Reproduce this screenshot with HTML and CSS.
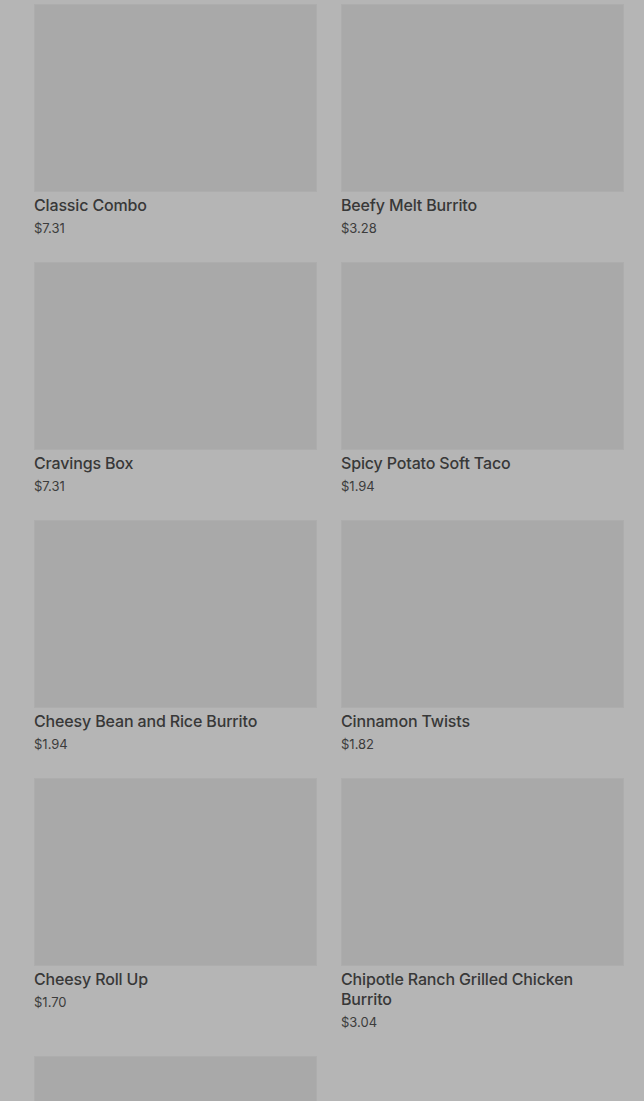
FILE: index.html
```html
<!DOCTYPE html>
<html lang="en">
<head>
    <meta charset="UTF-8">
    <meta name="viewport" content="width=device-width, initial-scale=1.0">
    <title>Menu</title>
    <link rel="stylesheet" href="styles.css">
</head>
<body>
    <div class="menu-grid">
        <div class="item">
            <div class="item-img"></div>
            <div class="item-name">Classic Combo</div>
            <div class="item-price">$7.31</div>
        </div>
        <div class="item">
            <div class="item-img"></div>
            <div class="item-name">Beefy Melt Burrito</div>
            <div class="item-price">$3.28</div>
        </div>
        <div class="item">
            <div class="item-img"></div>
            <div class="item-name">Cravings Box</div>
            <div class="item-price">$7.31</div>
        </div>
        <div class="item">
            <div class="item-img"></div>
            <div class="item-name">Spicy Potato Soft Taco</div>
            <div class="item-price">$1.94</div>
        </div>
        <div class="item">
            <div class="item-img"></div>
            <div class="item-name">Cheesy Bean and Rice Burrito</div>
            <div class="item-price">$1.94</div>
        </div>
        <div class="item">
            <div class="item-img"></div>
            <div class="item-name">Cinnamon Twists</div>
            <div class="item-price">$1.82</div>
        </div>
        <div class="item">
            <div class="item-img"></div>
            <div class="item-name">Cheesy Roll Up</div>
            <div class="item-price">$1.70</div>
        </div>
        <div class="item">
            <div class="item-img"></div>
            <div class="item-name">Chipotle Ranch Grilled Chicken Burrito</div>
            <div class="item-price">$3.04</div>
        </div>
        <div class="item">
            <div class="item-img"></div>
        </div>
    </div>
</body>
</html>
```

FILE: styles.css
```css
body {
    margin: 0;
    padding: 0;
    background-color: #b5b5b5;
    font-family: Inter, "Noto Sans", sans-serif;
    overflow: hidden;
}

.menu-grid {
    display: grid;
    grid-template-columns: 283px 283px;
    column-gap: 24px;
    row-gap: 24px;
    padding: 4px 20px 0 34px;
    align-items: start;
}

.item-img {
    height: 188px;
    background-color: #a9a9a9;
    box-shadow: inset 0 0 0 1px #adadad;
}

.item-name {
    margin-top: 3px;
    font-size: 16px;
    line-height: 20px;
    font-weight: 500;
    letter-spacing: -0.15px;
    color: #383838;
}

.item-price {
    margin-top: 3px;
    font-size: 13px;
    line-height: 20px;
    color: #3c3c3c;
}
```
